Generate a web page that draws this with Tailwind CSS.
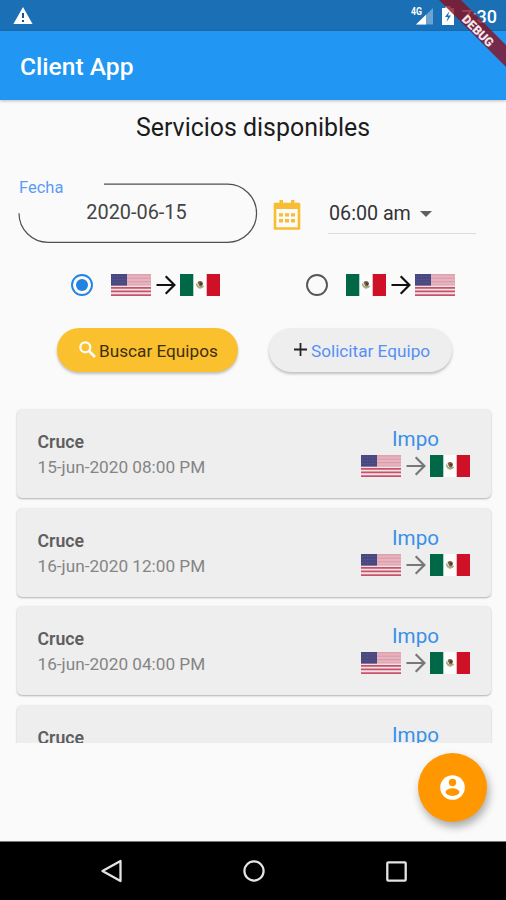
<!DOCTYPE html>
<html lang="es">
<head>
<meta charset="utf-8">
<title>Client App</title>
<script src="https://cdn.jsdelivr.net/npm/@tailwindcss/browser@4"></script>
</head>
<body class="bg-[#fafafa] font-[Roboto,sans-serif]">
<svg class="absolute w-0 h-0" aria-hidden="true">
  <defs>
    <symbol id="us" viewBox="0 0 40 22">
      <rect width="40" height="22" fill="#e6b4be"/>
      <path d="M0 .8H40M0 4.2H40M0 7.6H40M0 11H40" stroke="#dc9dab" stroke-width="1.2"/>
      <rect y="11.6" width="40" height="10.4" fill="#f3e1e5"/>
      <path d="M0 13.9H40M0 17.4H40M0 21.1H40" stroke="#c5546a" stroke-width="1.6"/>
      <rect width="16" height="11.6" fill="#494880"/>
      <path d="M1 2.5H15M1 5.5H15M1 8.5H15" stroke="#5b5a8d" stroke-width="1" stroke-dasharray="1 1.5"/>
    </symbol>
    <symbol id="mx" viewBox="0 0 40 22">
      <rect width="40" height="22" fill="#fcfcfc"/>
      <rect width="13.3" height="22" fill="#006847"/>
      <rect x="26.7" width="13.3" height="22" fill="#ce1126"/>
      <path d="M16.6 9.500a4 4 0 0 0 7 2.600" fill="none" stroke="#8fae7e" stroke-width="1.500"/>
      <path d="M17.500 8.200Q20 5.800 22.500 8Q23.800 10 22 12.200Q19.500 13.600 18.800 11Z" fill="#806044"/>
      <circle cx="21" cy="9.800" r="1.300" fill="#4f3c31"/>
      <path d="M17.500 13.300Q20 15.300 22.700 13.300" fill="none" stroke="#c8a984" stroke-width="1"/>
    </symbol>
    <symbol id="arrow" viewBox="0 0 20 20">
      <path d="M.5 10H18.500M9.700 1.300L18.400 10L9.700 18.700" fill="none" stroke="currentColor" stroke-width="2.200"/>
    </symbol>
  </defs>
</svg>

<div class="relative flex h-[900px] w-[506px] flex-col overflow-hidden">
  <div class="flex h-[31px] shrink-0 items-center justify-between bg-[#1a6fb5] pl-[13px] pr-[9px]">
    <svg class="h-[17px] w-[20px]" viewBox="0 0 20 17"><path d="M10 0L19.600 17H.4Z" fill="#fff"/><path d="M10 6V11M10 13V15" stroke="#1a4f91" stroke-width="2"/></svg>
    <div class="flex items-center">
      <svg class="mb-[2px] h-[20px] w-[23px]" viewBox="0 0 23 20"><path d="M22 3V19.500H5Z" fill="#6ba3d2"/><path d="M15 9.800V19.500H5Z" fill="#fff"/><text x="0" y="9.500" font-size="10" font-weight="700" fill="#fff" textLength="11" lengthAdjust="spacingAndGlyphs">4G</text></svg>
      <svg class="ml-[8px] h-[19px] w-[12px]" viewBox="0 0 12 19"><path d="M3.500 0H8.500V2H12V19H0V2H3.500Z" fill="#fff"/><path d="M7.500 5L3 11H6L4.500 16L9 9.500H6Z" fill="#1a6fb5"/></svg>
      <span class="ml-[8px] mt-[2px] text-[18px] leading-[20px] font-medium text-white">7:30</span>
    </div>
  </div>
  <header class="relative z-10 flex h-[69px] shrink-0 items-center bg-[#2196f3] pl-[20px] pt-[2px] shadow-[0_1px_3px_rgba(0,0,0,0.25)]">
    <h1 class="text-[24.600px] leading-[30px] font-medium text-white">Client App</h1>
  </header>

  <main class="flex h-[643px] shrink-0 flex-col overflow-hidden">
    <h2 class="mt-[12px] text-center text-[24.900px] leading-[32px] text-[#1c1c1c]">Servicios disponibles</h2>

    <div class="mt-[39px] flex h-[60px] items-center pl-[18px]">
      <div class="relative h-[60px] w-[239px]">
        <svg class="absolute inset-0 h-[60px] w-[240px]" viewBox="0 0 240 60"><path d="M86 1.200H209.500A29 29 0 0 1 209.500 59.300H30A29 29 0 0 1 1 30.200" fill="none" stroke="#505050" stroke-width="1.200"/></svg>
        <span class="absolute left-[1px] top-[-5px] text-[16.500px] leading-[20px] text-[#5b9cf5]">Fecha</span>
        <div class="flex h-[60px] items-center justify-center pr-[2px] text-[19.900px] text-[#444]">2020-06-15</div>
      </div>
      <svg class="ml-[16px] mt-[3px] h-[30px] w-[28px]" viewBox="0 0 28 30"><path d="M2 4H26V28.500H2Z" fill="none" stroke="#f8bd32" stroke-width="2.600" stroke-linejoin="round"/><path d="M1 3H27V9H1ZM6.500 0H10V4H6.500ZM18 0H21.500V4H18Z" fill="#f8bd32"/><path d="M6 13.200H10V16.600H6ZM12 13.200H16V16.600H12ZM18 13.200H22V16.600H18ZM6 19H10V22.400H6ZM12 19H16V22.400H12ZM18 19H22V22.400H18Z" fill="#f8bd32"/></svg>
      <div class="ml-[27px] mb-[9px] flex h-[42px] w-[148px] items-center self-end border-b border-[#dcdcdc] pt-[2px] pl-[1px] text-[19.700px] text-[#333]">
        <span>06:00 am</span>
        <svg class="ml-[9px] mt-[1px] h-[6px] w-[12px]" viewBox="0 0 12 6"><path d="M0 0H12L6 6Z" fill="#606060"/></svg>
      </div>
    </div>

    <div class="mt-[30px] flex h-[24px] items-center pl-[71px] text-[#111]">
      <svg class="size-[22px]" viewBox="0 0 22 22"><circle cx="11" cy="11" r="10" fill="none" stroke="#2483df" stroke-width="1.900"/><circle cx="11" cy="11" r="6" fill="#2483df"/></svg>
      <svg class="ml-[18px] h-[22px] w-[40px]"><use href="#us"/></svg>
      <svg class="ml-[5px] size-[20px]"><use href="#arrow"/></svg>
      <svg class="ml-[4px] h-[22px] w-[40px]"><use href="#mx"/></svg>
      <svg class="ml-[86px] size-[22px]" viewBox="0 0 22 22"><circle cx="11" cy="11" r="10" fill="none" stroke="#565656" stroke-width="1.900"/></svg>
      <svg class="ml-[18px] h-[22px] w-[40px]"><use href="#mx"/></svg>
      <svg class="ml-[5px] size-[20px]"><use href="#arrow"/></svg>
      <svg class="ml-[4px] h-[22px] w-[40px]"><use href="#us"/></svg>
    </div>

    <div class="mt-[31px] flex h-[45px] gap-[31px] pl-[57px]">
      <button class="flex h-[44px] w-[181px] items-center rounded-full bg-[#fbc02d] pl-[22px] shadow-[0_2px_3px_rgba(0,0,0,0.24)]">
        <svg class="mb-[1px] h-[17px] w-[17px]" viewBox="0 0 17 17"><circle cx="6.300" cy="6.300" r="5" fill="none" stroke="#fff" stroke-width="2.200"/><path d="M10 10L16 16" stroke="#fff" stroke-width="2.600"/></svg>
        <span class="ml-[3px] mt-[4px] whitespace-nowrap text-[17.200px] text-[#3e300d]">Buscar Equipos</span>
      </button>
      <button class="flex h-[44px] w-[183px] items-center rounded-full bg-[#eeeeee] pl-[25px] shadow-[0_2px_3px_rgba(0,0,0,0.24)]">
        <svg class="mb-[1px] size-[13px]" viewBox="0 0 14 14"><path d="M7 0V14M0 7H14" stroke="#222" stroke-width="1.900"/></svg>
        <span class="ml-[4px] mt-[4px] whitespace-nowrap text-[17.200px] text-[#5590f5]">Solicitar Equipo</span>
      </button>
    </div>

    <section class="mt-[27px] flex h-[343px] flex-col gap-[9.600px] overflow-hidden pl-[17px] pr-[15px] pt-[9px]">
      <article class="flex h-[89px] shrink-0 justify-between rounded-[5px] bg-[#eeeeee] pl-[20.500px] pr-[21px] shadow-[0_1px_2px_rgba(0,0,0,0.3)]">
        <div class="pt-[21px] text-[17.200px] leading-[25px]"><div class="text-[17.700px] font-semibold text-[#5e5e5e]">Cruce</div><div class="text-[#858585]">15-jun-2020 08:00 PM</div></div>
        <div class="flex w-[109px] flex-col items-center pt-[18px]"><div class="text-[20.600px] leading-[25px] text-[#3990e8]">Impo</div><div class="mt-[3px] flex items-center text-[#777]"><svg class="h-[22px] w-[40px]"><use href="#us"/></svg><svg class="ml-[5px] mr-[4px] size-[20px]"><use href="#arrow"/></svg><svg class="h-[22px] w-[40px]"><use href="#mx"/></svg></div></div>
      </article>
      <article class="flex h-[89px] shrink-0 justify-between rounded-[5px] bg-[#eeeeee] pl-[20.500px] pr-[21px] shadow-[0_1px_2px_rgba(0,0,0,0.3)]">
        <div class="pt-[21px] text-[17.200px] leading-[25px]"><div class="text-[17.700px] font-semibold text-[#5e5e5e]">Cruce</div><div class="text-[#858585]">16-jun-2020 12:00 PM</div></div>
        <div class="flex w-[109px] flex-col items-center pt-[18px]"><div class="text-[20.600px] leading-[25px] text-[#3990e8]">Impo</div><div class="mt-[3px] flex items-center text-[#777]"><svg class="h-[22px] w-[40px]"><use href="#us"/></svg><svg class="ml-[5px] mr-[4px] size-[20px]"><use href="#arrow"/></svg><svg class="h-[22px] w-[40px]"><use href="#mx"/></svg></div></div>
      </article>
      <article class="flex h-[89px] shrink-0 justify-between rounded-[5px] bg-[#eeeeee] pl-[20.500px] pr-[21px] shadow-[0_1px_2px_rgba(0,0,0,0.3)]">
        <div class="pt-[21px] text-[17.200px] leading-[25px]"><div class="text-[17.700px] font-semibold text-[#5e5e5e]">Cruce</div><div class="text-[#858585]">16-jun-2020 04:00 PM</div></div>
        <div class="flex w-[109px] flex-col items-center pt-[18px]"><div class="text-[20.600px] leading-[25px] text-[#3990e8]">Impo</div><div class="mt-[3px] flex items-center text-[#777]"><svg class="h-[22px] w-[40px]"><use href="#us"/></svg><svg class="ml-[5px] mr-[4px] size-[20px]"><use href="#arrow"/></svg><svg class="h-[22px] w-[40px]"><use href="#mx"/></svg></div></div>
      </article>
      <article class="flex h-[89px] shrink-0 justify-between rounded-[5px] bg-[#eeeeee] pl-[20.500px] pr-[21px] shadow-[0_1px_2px_rgba(0,0,0,0.3)]">
        <div class="pt-[21px] text-[17.200px] leading-[25px]"><div class="text-[17.700px] font-semibold text-[#5e5e5e]">Cruce</div></div>
        <div class="flex w-[109px] flex-col items-center pt-[18px]"><div class="text-[20.600px] leading-[25px] text-[#3990e8]">Impo</div></div>
      </article>
    </section>
  </main>

  <nav class="mt-auto flex h-[59px] shrink-0 items-center border-t border-[#777] bg-black pl-[101px]">
    <svg class="h-[24px] w-[21px]" viewBox="0 0 21 24"><path d="M1.500 12L19.500 2V22Z" fill="none" stroke="#e4e4e4" stroke-width="2.300" stroke-linejoin="round"/></svg>
    <svg class="ml-[121px] size-[22px]" viewBox="0 0 22 22"><circle cx="11" cy="11" r="9.600" fill="none" stroke="#e4e4e4" stroke-width="2.200"/></svg>
    <svg class="ml-[121px] size-[21px]" viewBox="0 0 21 21"><rect x="1.300" y="1.300" width="18.400" height="18.400" rx="1" fill="none" stroke="#e4e4e4" stroke-width="2.300"/></svg>
  </nav>

  <button class="absolute left-[418px] top-[753px] flex size-[69px] items-center justify-center rounded-full bg-[#ff9800] shadow-[2px_5px_9px_rgba(0,0,0,0.32)]">
    <svg class="size-[25px]" viewBox="0 0 26 26"><circle cx="13" cy="13" r="12.800" fill="#fff"/><circle cx="13" cy="7.800" r="3.800" fill="#ff9800"/><ellipse cx="13" cy="17.800" rx="7.300" ry="4" fill="#ff9800"/></svg>
  </button>

  <svg class="absolute right-0 top-0 z-20 h-[80px] w-[80px]" viewBox="426 0 80 80">
    <path d="M439 0H461L506 45V67Z" fill="#8a0f20" fill-opacity=".8"/>
    <text transform="translate(474.800 33.800) rotate(45)" text-anchor="middle" font-size="12.300" font-weight="900" fill="#f3e8ec">DEBUG</text>
  </svg>
</div>
</body>
</html>
